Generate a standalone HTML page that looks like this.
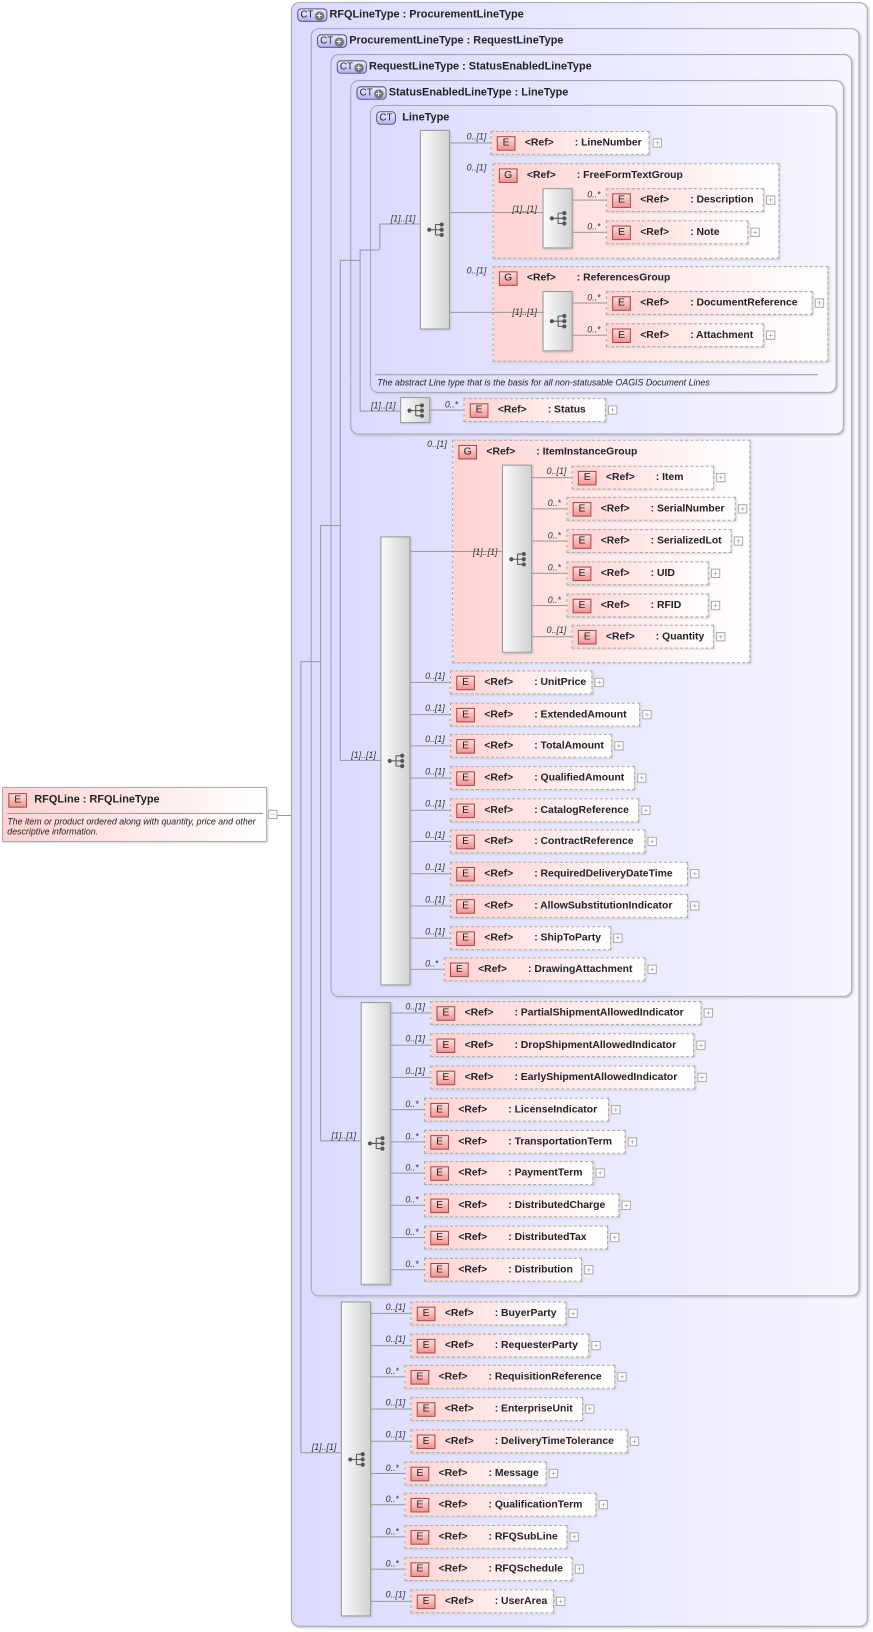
<!DOCTYPE html>
<html><head><meta charset="utf-8"><style>
*{box-sizing:border-box}
body{margin:0;width:873px;height:1632px;overflow:hidden;background:#fff;font-family:"Liberation Sans",sans-serif;color:#222}
#w{position:absolute;left:0;top:0;width:840px;height:1570px;transform-origin:0 0;transform:scale(1.0393,1.0395)}
.c{position:absolute;border:1px solid #a4a4b4;border-radius:8px;background:linear-gradient(to right,#dadaff,#f6f6ff);box-shadow:1px 1px 2px #c4c4cc}
.ct{position:absolute;left:5px;top:5px;height:13px;padding:0 2px;border:1px solid #55558a;border-radius:4px;background:linear-gradient(#eeeeff,#b4b4f0);font-size:9.5px;line-height:11px;color:#222}
.ct i{display:inline-block;width:9px;height:9px;margin-left:1px;border-radius:50%;background:#777;color:#fff;font-style:normal;font-size:9px;line-height:9px;text-align:center;font-weight:bold;vertical-align:-1px}
.h{position:absolute;left:36px;top:5px;font-size:10.5px;font-weight:bold;white-space:nowrap}
.e,.g{position:absolute;border:1px dashed #aaa;background:linear-gradient(to right,#ffd2d2,#fff);box-shadow:1px 1px 2px #ccc;font-size:10px;font-weight:bold;white-space:nowrap}
.e{height:23px}
.b{position:absolute;left:5px;top:4px;width:18px;height:14px;border:1px solid #a04848;background:linear-gradient(#ffdede,#f09494);font-size:10px;font-weight:normal;text-align:center;line-height:12px}
.r{position:absolute;left:32px;top:5px}
.n{position:absolute;left:80px;top:5px}
.p{position:absolute;width:9px;height:9px;border:1px solid #aaa;background:#fff;font-size:8px;line-height:7px;text-align:center;color:#999}
.k{position:absolute;font-size:8.5px;font-style:italic;color:#333;white-space:nowrap}
.l{position:absolute;background:#999}
.s{position:absolute;border:1px solid #999;background:linear-gradient(to right,#fafafa,#d2d2d2);box-shadow:1px 1px 2px #bbb}
.s svg{position:absolute;left:5px;top:50%;margin-top:-8px}
</style></head><body><div id="w">

<!-- root element -->
<div style="position:absolute;left:2px;top:757px;width:255px;height:53px;border:1px solid #aaa;background:linear-gradient(to right,#ffd2d2,#fff);box-shadow:1px 1px 2px #ccc">
<div class="b" style="top:5px">E</div><div style="position:absolute;left:30px;top:5px;font-size:10.5px;font-weight:bold">RFQLine : RFQLineType</div>
<div class="l" style="left:4px;top:24px;width:246px;height:1px"></div>
<div style="position:absolute;left:4px;top:27px;font-size:8.5px;font-style:italic;line-height:10px">The item or product ordered along with quantity, price and other<br>descriptive information.</div></div>
<div class="p" style="left:258px;top:779px">−</div>
<div class="l" style="left:267px;top:784px;width:22px;height:1px"></div>

<div class="c" style="left:280px;top:2px;width:555px;height:1563px"><div class="ct">CT<i>+</i></div><div class="h">RFQLineType : ProcurementLineType</div></div>
<div class="c" style="left:299px;top:27px;width:528px;height:1220px"><div class="ct">CT<i>+</i></div><div class="h">ProcurementLineType : RequestLineType</div></div>
<div class="c" style="left:318px;top:52px;width:502px;height:907px"><div class="ct">CT<i>+</i></div><div class="h">RequestLineType : StatusEnabledLineType</div></div>
<div class="c" style="left:337px;top:77px;width:475px;height:341px"><div class="ct">CT<i>+</i></div><div class="h">StatusEnabledLineType : LineType</div></div>
<div class="c" style="left:356px;top:101px;width:449px;height:277px"><div class="ct">CT</div><div class="h" style="left:30px">LineType</div>
<div class="l" style="left:4px;top:258px;width:426px;height:1px"></div>
<div style="position:absolute;left:6px;top:261px;font-size:8.5px;font-style:italic;white-space:nowrap">The abstract Line type that is the basis for all non-statusable OAGIS Document Lines</div></div>

<!-- ladder lines -->
<div class="l" style="left:289px;top:636px;width:1px;height:761px"></div>
<div class="l" style="left:289px;top:636px;width:19px;height:1px"></div>
<div class="l" style="left:308px;top:505px;width:1px;height:592px"></div>
<div class="l" style="left:308px;top:505px;width:19px;height:1px"></div>
<div class="l" style="left:327px;top:250px;width:1px;height:481px"></div>
<div class="l" style="left:327px;top:250px;width:19px;height:1px"></div>
<div class="l" style="left:346px;top:240px;width:1px;height:155px"></div>
<div class="l" style="left:346px;top:240px;width:19px;height:1px"></div>
<div class="l" style="left:365px;top:215px;width:1px;height:25px"></div>
<div class="l" style="left:365px;top:215px;width:39px;height:1px"></div><div class="k" style="left:376px;top:205px">[1]..[1]</div>
<div class="l" style="left:346px;top:395px;width:39px;height:1px"></div><div class="k" style="left:357px;top:385px">[1]..[1]</div>
<div class="l" style="left:327px;top:731px;width:39px;height:1px"></div><div class="k" style="left:338px;top:721px">[1]..[1]</div>
<div class="l" style="left:308px;top:1097px;width:39px;height:1px"></div><div class="k" style="left:319px;top:1087px">[1]..[1]</div>
<div class="l" style="left:289px;top:1397px;width:39px;height:1px"></div><div class="k" style="left:300px;top:1387px">[1]..[1]</div>

<!-- groups -->
<div class="g" style="left:474px;top:157px;width:276px;height:92px"><div class="b">G</div><div class="r">&lt;Ref&gt;</div><div class="n">: FreeFormTextGroup</div></div><div class="k" style="left:449px;top:156px">0..[1]</div>
<div class="g" style="left:474px;top:256px;width:323px;height:92px"><div class="b">G</div><div class="r">&lt;Ref&gt;</div><div class="n">: ReferencesGroup</div></div><div class="k" style="left:449px;top:255px">0..[1]</div>
<div class="g" style="left:435px;top:423px;width:287px;height:215px"><div class="b">G</div><div class="r">&lt;Ref&gt;</div><div class="n">: ItemInstanceGroup</div></div><div class="k" style="left:411px;top:422px">0..[1]</div>

<div class="l" style="left:433px;top:204px;width:89px;height:1px"></div><div class="k" style="left:493px;top:196px">[1]..[1]</div>
<div class="l" style="left:433px;top:300px;width:89px;height:1px"></div><div class="k" style="left:493px;top:295px">[1]..[1]</div>
<div class="l" style="left:395px;top:530px;width:88px;height:1px"></div><div class="k" style="left:455px;top:526px">[1]..[1]</div>

<!-- sequences -->
<svg width="0" height="0" style="position:absolute"><defs><g id="q" fill="#555" stroke="#555"><circle cx="3" cy="8" r="2" stroke="none"/><path d="M3 8H9M9 3V13M9 3H15M9 8H15M9 13H15" fill="none"/><circle cx="15" cy="3" r="2" stroke="none"/><circle cx="15" cy="8" r="2" stroke="none"/><circle cx="15" cy="13" r="2" stroke="none"/></g></defs></svg>
<div class="s" style="left:404px;top:125px;width:29px;height:192px"><svg width="20" height="16"><use href="#q"/></svg></div>
<div class="s" style="left:522px;top:181px;width:29px;height:58px"><svg width="20" height="16"><use href="#q"/></svg></div>
<div class="s" style="left:522px;top:280px;width:29px;height:58px"><svg width="20" height="16"><use href="#q"/></svg></div>
<div class="s" style="left:385px;top:382px;width:29px;height:25px"><svg width="20" height="16"><use href="#q"/></svg></div>
<div class="s" style="left:483px;top:447px;width:29px;height:181px"><svg width="20" height="16"><use href="#q"/></svg></div>
<div class="s" style="left:366px;top:516px;width:29px;height:432px"><svg width="20" height="16"><use href="#q"/></svg></div>
<div class="s" style="left:347px;top:964px;width:29px;height:272px"><svg width="20" height="16"><use href="#q"/></svg></div>
<div class="s" style="left:328px;top:1252px;width:29px;height:303px"><svg width="20" height="16"><use href="#q"/></svg></div>

<!-- elements -->
<div class="l" style="left:433px;top:137px;width:39px;height:1px"></div><div class="k" style="left:449px;top:126px">0..[1]</div><div class="e" style="left:472px;top:126px;width:153px"><div class="b">E</div><div class="r">&lt;Ref&gt;</div><div class="n">: LineNumber</div></div><div class="p" style="left:628px;top:133px">+</div>
<div class="l" style="left:551px;top:192px;width:32px;height:1px"></div><div class="k" style="left:565px;top:182px">0..*</div><div class="e" style="left:583px;top:181px;width:152px"><div class="b">E</div><div class="r">&lt;Ref&gt;</div><div class="n">: Description</div></div><div class="p" style="left:737px;top:188px">+</div>
<div class="l" style="left:551px;top:223px;width:32px;height:1px"></div><div class="k" style="left:565px;top:213px">0..*</div><div class="e" style="left:583px;top:212px;width:137px"><div class="b">E</div><div class="r">&lt;Ref&gt;</div><div class="n">: Note</div></div><div class="p" style="left:722px;top:219px">+</div>
<div class="l" style="left:551px;top:291px;width:32px;height:1px"></div><div class="k" style="left:565px;top:281px">0..*</div><div class="e" style="left:583px;top:280px;width:199px"><div class="b">E</div><div class="r">&lt;Ref&gt;</div><div class="n">: DocumentReference</div></div><div class="p" style="left:784px;top:287px">+</div>
<div class="l" style="left:551px;top:322px;width:32px;height:1px"></div><div class="k" style="left:565px;top:312px">0..*</div><div class="e" style="left:583px;top:311px;width:152px"><div class="b">E</div><div class="r">&lt;Ref&gt;</div><div class="n">: Attachment</div></div><div class="p" style="left:737px;top:318px">+</div>
<div class="l" style="left:414px;top:394px;width:32px;height:1px"></div><div class="k" style="left:428px;top:384px">0..*</div><div class="e" style="left:446px;top:383px;width:137px"><div class="b">E</div><div class="r">&lt;Ref&gt;</div><div class="n">: Status</div></div><div class="p" style="left:585px;top:390px">+</div>

<div class="l" style="left:512px;top:459px;width:38px;height:1px"></div><div class="k" style="left:526px;top:448px">0..[1]</div><div class="e" style="left:550px;top:448px;width:137px"><div class="b">E</div><div class="r">&lt;Ref&gt;</div><div class="n">: Item</div></div><div class="p" style="left:689px;top:455px">+</div>
<div class="l" style="left:512px;top:489px;width:33px;height:1px"></div><div class="k" style="left:527px;top:479px">0..*</div><div class="e" style="left:545px;top:478px;width:163px"><div class="b">E</div><div class="r">&lt;Ref&gt;</div><div class="n">: SerialNumber</div></div><div class="p" style="left:710px;top:485px">+</div>
<div class="l" style="left:512px;top:520px;width:33px;height:1px"></div><div class="k" style="left:527px;top:510px">0..*</div><div class="e" style="left:545px;top:509px;width:159px"><div class="b">E</div><div class="r">&lt;Ref&gt;</div><div class="n">: SerializedLot</div></div><div class="p" style="left:706px;top:516px">+</div>
<div class="l" style="left:512px;top:551px;width:33px;height:1px"></div><div class="k" style="left:527px;top:541px">0..*</div><div class="e" style="left:545px;top:540px;width:137px"><div class="b">E</div><div class="r">&lt;Ref&gt;</div><div class="n">: UID</div></div><div class="p" style="left:684px;top:547px">+</div>
<div class="l" style="left:512px;top:582px;width:33px;height:1px"></div><div class="k" style="left:527px;top:572px">0..*</div><div class="e" style="left:545px;top:571px;width:137px"><div class="b">E</div><div class="r">&lt;Ref&gt;</div><div class="n">: RFID</div></div><div class="p" style="left:684px;top:578px">+</div>
<div class="l" style="left:512px;top:612px;width:38px;height:1px"></div><div class="k" style="left:526px;top:601px">0..[1]</div><div class="e" style="left:550px;top:601px;width:137px"><div class="b">E</div><div class="r">&lt;Ref&gt;</div><div class="n">: Quantity</div></div><div class="p" style="left:689px;top:608px">+</div>

<div class="l" style="left:395px;top:656px;width:38px;height:1px"></div><div class="k" style="left:409px;top:645px">0..[1]</div><div class="e" style="left:433px;top:645px;width:137px"><div class="b">E</div><div class="r">&lt;Ref&gt;</div><div class="n">: UnitPrice</div></div><div class="p" style="left:572px;top:652px">+</div>
<div class="l" style="left:395px;top:687px;width:38px;height:1px"></div><div class="k" style="left:409px;top:676px">0..[1]</div><div class="e" style="left:433px;top:676px;width:183px"><div class="b">E</div><div class="r">&lt;Ref&gt;</div><div class="n">: ExtendedAmount</div></div><div class="p" style="left:618px;top:683px">+</div>
<div class="l" style="left:395px;top:717px;width:38px;height:1px"></div><div class="k" style="left:409px;top:706px">0..[1]</div><div class="e" style="left:433px;top:706px;width:156px"><div class="b">E</div><div class="r">&lt;Ref&gt;</div><div class="n">: TotalAmount</div></div><div class="p" style="left:591px;top:713px">+</div>
<div class="l" style="left:395px;top:748px;width:38px;height:1px"></div><div class="k" style="left:409px;top:737px">0..[1]</div><div class="e" style="left:433px;top:737px;width:178px"><div class="b">E</div><div class="r">&lt;Ref&gt;</div><div class="n">: QualifiedAmount</div></div><div class="p" style="left:613px;top:744px">+</div>
<div class="l" style="left:395px;top:779px;width:38px;height:1px"></div><div class="k" style="left:409px;top:768px">0..[1]</div><div class="e" style="left:433px;top:768px;width:182px"><div class="b">E</div><div class="r">&lt;Ref&gt;</div><div class="n">: CatalogReference</div></div><div class="p" style="left:617px;top:775px">+</div>
<div class="l" style="left:395px;top:809px;width:38px;height:1px"></div><div class="k" style="left:409px;top:798px">0..[1]</div><div class="e" style="left:433px;top:798px;width:188px"><div class="b">E</div><div class="r">&lt;Ref&gt;</div><div class="n">: ContractReference</div></div><div class="p" style="left:623px;top:805px">+</div>
<div class="l" style="left:395px;top:840px;width:38px;height:1px"></div><div class="k" style="left:409px;top:829px">0..[1]</div><div class="e" style="left:433px;top:829px;width:229px"><div class="b">E</div><div class="r">&lt;Ref&gt;</div><div class="n">: RequiredDeliveryDateTime</div></div><div class="p" style="left:664px;top:836px">+</div>
<div class="l" style="left:395px;top:871px;width:38px;height:1px"></div><div class="k" style="left:409px;top:860px">0..[1]</div><div class="e" style="left:433px;top:860px;width:229px"><div class="b">E</div><div class="r">&lt;Ref&gt;</div><div class="n">: AllowSubstitutionIndicator</div></div><div class="p" style="left:664px;top:867px">+</div>
<div class="l" style="left:395px;top:902px;width:38px;height:1px"></div><div class="k" style="left:409px;top:891px">0..[1]</div><div class="e" style="left:433px;top:891px;width:155px"><div class="b">E</div><div class="r">&lt;Ref&gt;</div><div class="n">: ShipToParty</div></div><div class="p" style="left:590px;top:898px">+</div>
<div class="l" style="left:395px;top:932px;width:32px;height:1px"></div><div class="k" style="left:409px;top:922px">0..*</div><div class="e" style="left:427px;top:921px;width:194px"><div class="b">E</div><div class="r">&lt;Ref&gt;</div><div class="n">: DrawingAttachment</div></div><div class="p" style="left:623px;top:928px">+</div>

<div class="l" style="left:376px;top:974px;width:38px;height:1px"></div><div class="k" style="left:390px;top:963px">0..[1]</div><div class="e" style="left:414px;top:963px;width:261px"><div class="b">E</div><div class="r">&lt;Ref&gt;</div><div class="n">: PartialShipmentAllowedIndicator</div></div><div class="p" style="left:677px;top:970px">+</div>
<div class="l" style="left:376px;top:1005px;width:38px;height:1px"></div><div class="k" style="left:390px;top:994px">0..[1]</div><div class="e" style="left:414px;top:994px;width:254px"><div class="b">E</div><div class="r">&lt;Ref&gt;</div><div class="n">: DropShipmentAllowedIndicator</div></div><div class="p" style="left:670px;top:1001px">+</div>
<div class="l" style="left:376px;top:1036px;width:38px;height:1px"></div><div class="k" style="left:390px;top:1025px">0..[1]</div><div class="e" style="left:414px;top:1025px;width:255px"><div class="b">E</div><div class="r">&lt;Ref&gt;</div><div class="n">: EarlyShipmentAllowedIndicator</div></div><div class="p" style="left:671px;top:1032px">+</div>
<div class="l" style="left:376px;top:1067px;width:32px;height:1px"></div><div class="k" style="left:390px;top:1057px">0..*</div><div class="e" style="left:408px;top:1056px;width:178px"><div class="b">E</div><div class="r">&lt;Ref&gt;</div><div class="n">: LicenseIndicator</div></div><div class="p" style="left:588px;top:1063px">+</div>
<div class="l" style="left:376px;top:1098px;width:32px;height:1px"></div><div class="k" style="left:390px;top:1088px">0..*</div><div class="e" style="left:408px;top:1087px;width:194px"><div class="b">E</div><div class="r">&lt;Ref&gt;</div><div class="n">: TransportationTerm</div></div><div class="p" style="left:604px;top:1094px">+</div>
<div class="l" style="left:376px;top:1128px;width:32px;height:1px"></div><div class="k" style="left:390px;top:1118px">0..*</div><div class="e" style="left:408px;top:1117px;width:163px"><div class="b">E</div><div class="r">&lt;Ref&gt;</div><div class="n">: PaymentTerm</div></div><div class="p" style="left:573px;top:1124px">+</div>
<div class="l" style="left:376px;top:1159px;width:32px;height:1px"></div><div class="k" style="left:390px;top:1149px">0..*</div><div class="e" style="left:408px;top:1148px;width:188px"><div class="b">E</div><div class="r">&lt;Ref&gt;</div><div class="n">: DistributedCharge</div></div><div class="p" style="left:598px;top:1155px">+</div>
<div class="l" style="left:376px;top:1190px;width:32px;height:1px"></div><div class="k" style="left:390px;top:1180px">0..*</div><div class="e" style="left:408px;top:1179px;width:177px"><div class="b">E</div><div class="r">&lt;Ref&gt;</div><div class="n">: DistributedTax</div></div><div class="p" style="left:587px;top:1186px">+</div>
<div class="l" style="left:376px;top:1221px;width:32px;height:1px"></div><div class="k" style="left:390px;top:1211px">0..*</div><div class="e" style="left:408px;top:1210px;width:152px"><div class="b">E</div><div class="r">&lt;Ref&gt;</div><div class="n">: Distribution</div></div><div class="p" style="left:562px;top:1217px">+</div>

<div class="l" style="left:357px;top:1263px;width:38px;height:1px"></div><div class="k" style="left:371px;top:1252px">0..[1]</div><div class="e" style="left:395px;top:1252px;width:150px"><div class="b">E</div><div class="r">&lt;Ref&gt;</div><div class="n">: BuyerParty</div></div><div class="p" style="left:547px;top:1259px">+</div>
<div class="l" style="left:357px;top:1294px;width:38px;height:1px"></div><div class="k" style="left:371px;top:1283px">0..[1]</div><div class="e" style="left:395px;top:1283px;width:172px"><div class="b">E</div><div class="r">&lt;Ref&gt;</div><div class="n">: RequesterParty</div></div><div class="p" style="left:569px;top:1290px">+</div>
<div class="l" style="left:357px;top:1324px;width:32px;height:1px"></div><div class="k" style="left:371px;top:1314px">0..*</div><div class="e" style="left:389px;top:1313px;width:203px"><div class="b">E</div><div class="r">&lt;Ref&gt;</div><div class="n">: RequisitionReference</div></div><div class="p" style="left:594px;top:1320px">+</div>
<div class="l" style="left:357px;top:1355px;width:38px;height:1px"></div><div class="k" style="left:371px;top:1344px">0..[1]</div><div class="e" style="left:395px;top:1344px;width:166px"><div class="b">E</div><div class="r">&lt;Ref&gt;</div><div class="n">: EnterpriseUnit</div></div><div class="p" style="left:563px;top:1351px">+</div>
<div class="l" style="left:357px;top:1386px;width:38px;height:1px"></div><div class="k" style="left:371px;top:1375px">0..[1]</div><div class="e" style="left:395px;top:1375px;width:209px"><div class="b">E</div><div class="r">&lt;Ref&gt;</div><div class="n">: DeliveryTimeTolerance</div></div><div class="p" style="left:606px;top:1382px">+</div>
<div class="l" style="left:357px;top:1417px;width:32px;height:1px"></div><div class="k" style="left:371px;top:1407px">0..*</div><div class="e" style="left:389px;top:1406px;width:137px"><div class="b">E</div><div class="r">&lt;Ref&gt;</div><div class="n">: Message</div></div><div class="p" style="left:528px;top:1413px">+</div>
<div class="l" style="left:357px;top:1447px;width:32px;height:1px"></div><div class="k" style="left:371px;top:1437px">0..*</div><div class="e" style="left:389px;top:1436px;width:185px"><div class="b">E</div><div class="r">&lt;Ref&gt;</div><div class="n">: QualificationTerm</div></div><div class="p" style="left:576px;top:1443px">+</div>
<div class="l" style="left:357px;top:1478px;width:32px;height:1px"></div><div class="k" style="left:371px;top:1468px">0..*</div><div class="e" style="left:389px;top:1467px;width:157px"><div class="b">E</div><div class="r">&lt;Ref&gt;</div><div class="n">: RFQSubLine</div></div><div class="p" style="left:548px;top:1474px">+</div>
<div class="l" style="left:357px;top:1509px;width:32px;height:1px"></div><div class="k" style="left:371px;top:1499px">0..*</div><div class="e" style="left:389px;top:1498px;width:162px"><div class="b">E</div><div class="r">&lt;Ref&gt;</div><div class="n">: RFQSchedule</div></div><div class="p" style="left:553px;top:1505px">+</div>
<div class="l" style="left:357px;top:1540px;width:38px;height:1px"></div><div class="k" style="left:371px;top:1529px">0..[1]</div><div class="e" style="left:395px;top:1529px;width:138px"><div class="b">E</div><div class="r">&lt;Ref&gt;</div><div class="n">: UserArea</div></div><div class="p" style="left:535px;top:1536px">+</div>

</div></body></html>
